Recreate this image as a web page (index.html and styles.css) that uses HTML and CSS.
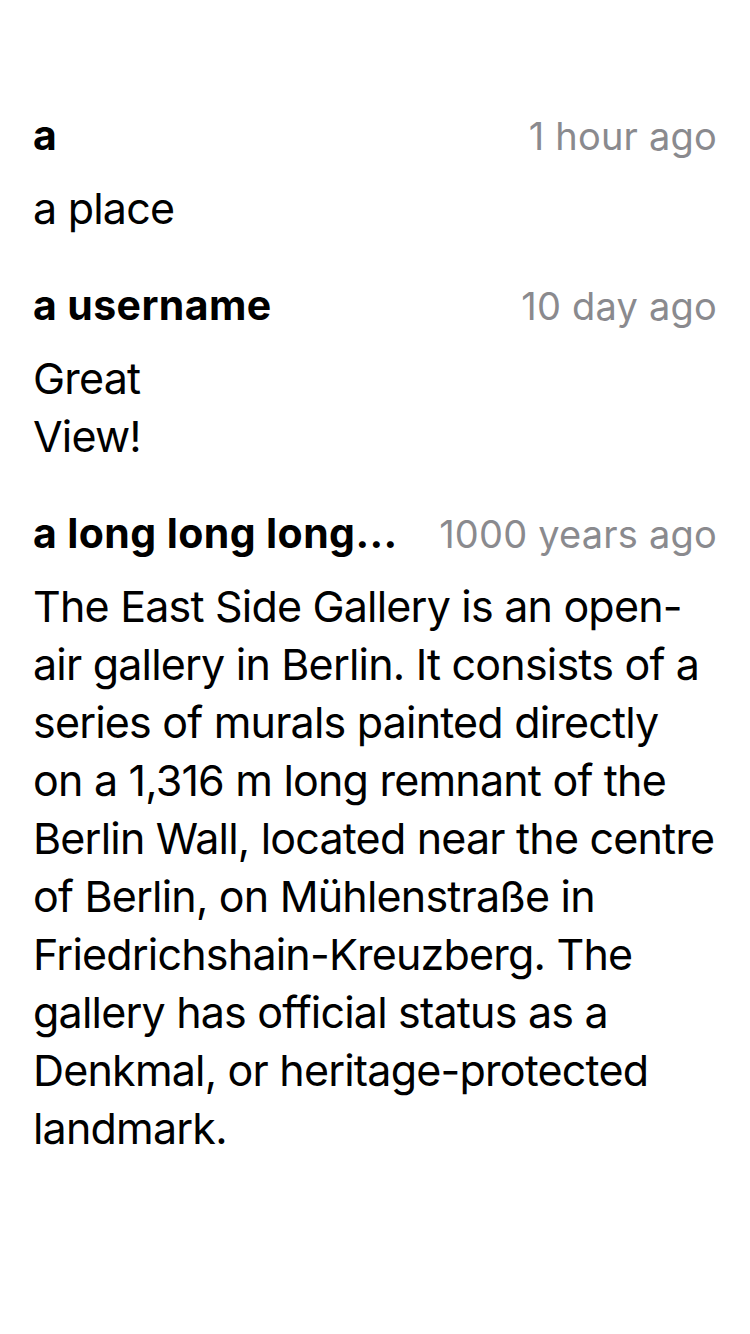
FILE: index.html
```html
<!DOCTYPE html>
<html lang="en">
<head>
<meta charset="utf-8">
<title>Comments</title>
<link rel="stylesheet" href="styles.css">
</head>
<body>
<main class="comments">
  <article class="comment">
    <header class="comment-head">
      <span class="comment-user">a</span>
      <span class="comment-time">1 hour ago</span>
    </header>
    <p class="comment-text">a place</p>
  </article>
  <article class="comment">
    <header class="comment-head">
      <span class="comment-user">a username</span>
      <span class="comment-time">10 day ago</span>
    </header>
    <p class="comment-text narrow">Great View!</p>
  </article>
  <article class="comment">
    <header class="comment-head">
      <span class="comment-user">a long long long...</span>
      <span class="comment-time">1000 years ago</span>
    </header>
    <p class="comment-text">The East Side Gallery is an open-air gallery in Berlin. It consists of a series of murals painted directly on a 1,316 m long remnant of the Berlin Wall, located near the centre of Berlin, on Mühlenstraße in Friedrichshain-Kreuzberg. The gallery has official status as a Denkmal, or heritage-protected landmark.</p>
  </article>
</main>
</body>
</html>
```

FILE: styles.css
```css
html, body {
  margin: 0;
  padding: 0;
  background: #ffffff;
}

body {
  font-family: Inter, Roboto, "Liberation Sans", sans-serif;
  color: #000000;
  width: 750px;
  height: 1334px;
}

.comments {
  display: flex;
  flex-direction: column;
  gap: 39px;
  padding: 106px 32px 0 33px;
}

.comment {
  display: flex;
  flex-direction: column;
  gap: 14px;
}

.comment-head {
  display: flex;
  align-items: baseline;
  justify-content: space-between;
  gap: 30px;
  line-height: 58px;
}

.comment-user {
  font-size: 41px;
  font-weight: 700;
  letter-spacing: 0.4px;
  white-space: nowrap;
}

.comment-time {
  font-size: 38px;
  color: #8a8a8e;
  white-space: nowrap;
  letter-spacing: 0.2px;
  margin-right: 1px;
}

.comment-text {
  margin: 0;
  font-size: 43px;
  line-height: 58px;
  letter-spacing: -0.8px;
}

.comment-text.narrow {
  width: 140px;
}
```
